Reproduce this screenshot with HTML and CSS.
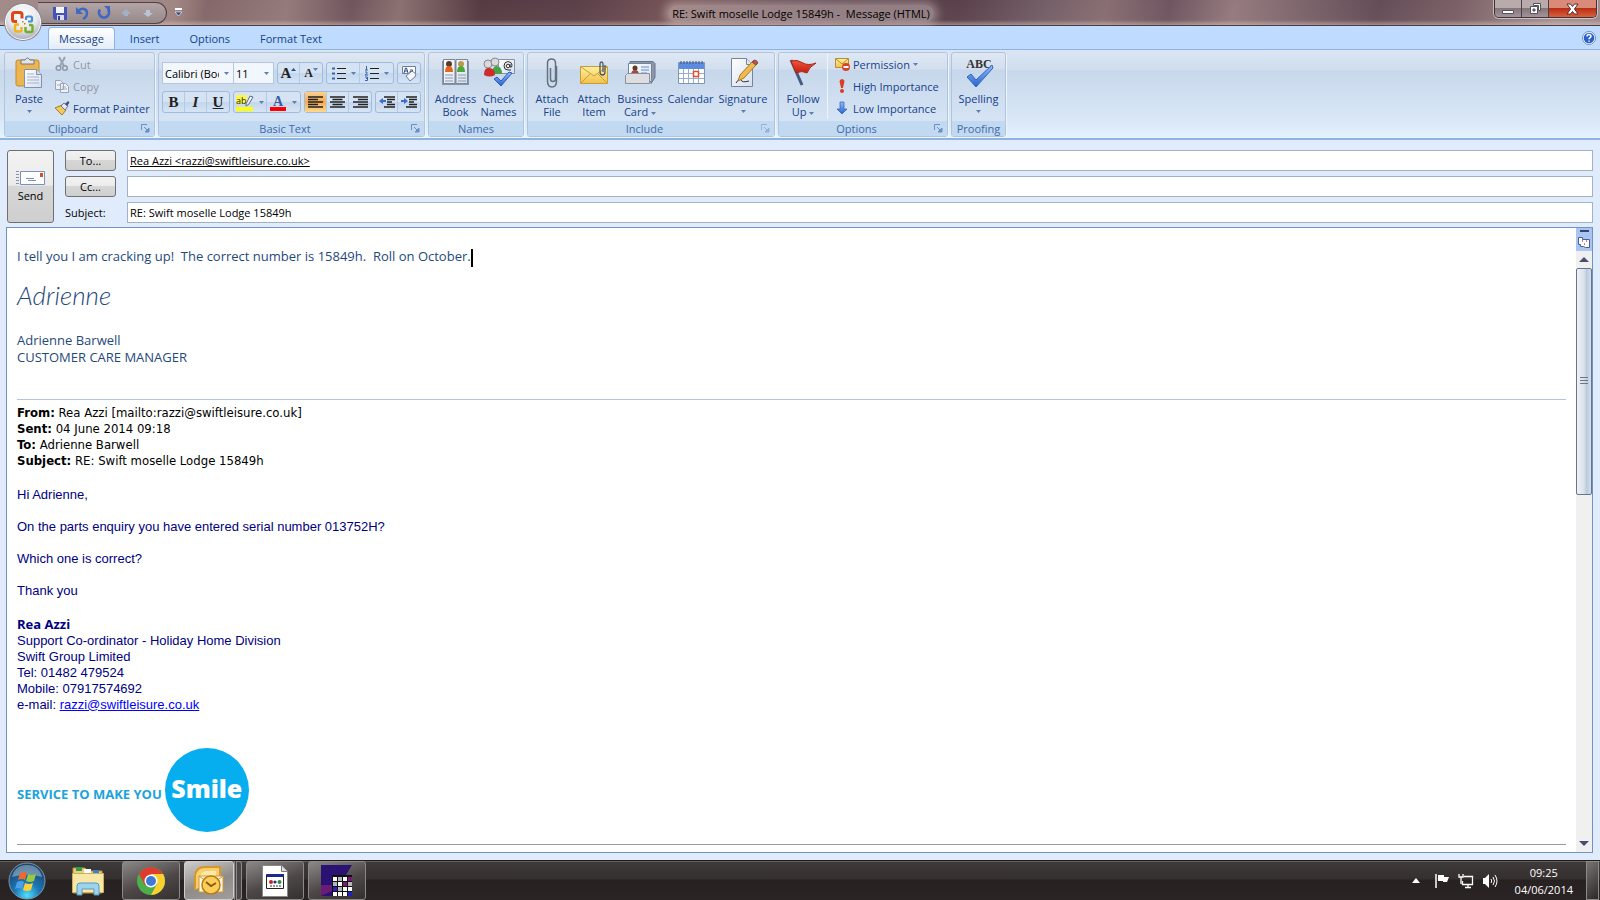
FILE: index.html
```
<!DOCTYPE html>
<html lang="en">
<head>
    <meta charset="UTF-8">
    <meta name="viewport" content="width=device-width, initial-scale=1.0">
    <title>RE: Swift moselle Lodge 15849h - Message (HTML)</title>
    <link rel="stylesheet" href="styles.css">
</head>
<body>
    <svg class="defs" width="0" height="0" aria-hidden="true">
        <defs>
            <linearGradient id="gSheet" x1="0" y1="0" x2="1" y2="1"><stop offset="0" stop-color="#ffffff"/><stop offset="1" stop-color="#d5dfee"/></linearGradient>
            <linearGradient id="gGold" x1="0" y1="0" x2="0" y2="1"><stop offset="0" stop-color="#fff0a0"/><stop offset="1" stop-color="#f2c04c"/></linearGradient>
            <linearGradient id="gBlue" x1="0" y1="0" x2="0" y2="1"><stop offset="0" stop-color="#8fbcff"/><stop offset="1" stop-color="#2a62cc"/></linearGradient>
            <linearGradient id="gRed" x1="0" y1="0" x2="0" y2="1"><stop offset="0" stop-color="#f4553a"/><stop offset="1" stop-color="#c01f10"/></linearGradient>
            <radialGradient id="gOrb" cx="0.5" cy="0.9" r="0.8"><stop offset="0" stop-color="#4fe0ff"/><stop offset="0.45" stop-color="#1c76b4"/><stop offset="1" stop-color="#1b4772"/></radialGradient>
            <radialGradient id="gPearl" cx="0.5" cy="0.3" r="0.7"><stop offset="0" stop-color="#ffffff"/><stop offset="0.6" stop-color="#e6e8ee"/><stop offset="1" stop-color="#a9afbd"/></radialGradient>
            <symbol id="drop" viewBox="0 0 5 3"><path d="M0 0h5L2.500 3z" fill="#5b7fb5"/></symbol>
            <symbol id="launcher" viewBox="0 0 9 9"><path d="M.5 6V.5H6" fill="none" stroke="#6a8fc4"/><path d="M3 3l3 3M8 4v4H4z" stroke="#6a8fc4" fill="#6a8fc4"/></symbol>
        </defs>
    </svg>

    <!-- title bar -->
    <header class="titlebar">
        <button class="office" aria-label="Office">
            <svg width="40" height="40" viewBox="0 0 40 40">
                <circle cx="20" cy="20" r="19" fill="#8d8791"/>
                <circle cx="20" cy="20" r="17.500" fill="url(#gPearl)" stroke="#fff"/>
                <g fill="none">
                    <path d="M14 19.500h-2.500q-2 0-2-2v-5q0-2 2-2h5.500q2 0 2 2v4" stroke="#dd4813" stroke-width="3"/>
                    <path d="M23 18v-2q0-1.500 1.500-1.500h3q1.500 0 1.500 1.500v2q0 1.500-1.500 1.500H25" stroke="#4a8ed6" stroke-width="2.200"/>
                    <path d="M16 22.500h-2.500q-1.500 0-1.500 1.500v4q0 1.500 1.500 1.500H17q1.500 0 1.500-1.500v-3" stroke="#f0b51c" stroke-width="2.500"/>
                    <path d="M22.500 25v3.500q0 1.500 1.500 1.500h4q1.500 0 1.500-1.500v-4q0-1.500-1.500-1.500H26" stroke="#74ae2c" stroke-width="2.500"/>
                </g>
                <path d="M19 19h1.500v1.500H19zM21 21h1.500v1.500H21z" fill="#c8792c"/>
            </svg>
        </button>
        <div class="quick">
            <button aria-label="Save"><svg width="16" height="16" viewBox="0 0 16 16"><path d="M1 2h14v13H3l-2-2z" fill="#4552b8"/><path d="M4 2h8v6H4z" fill="#f3f5fc"/><path d="M5 10h7v5H5z" fill="#d8dcee"/><path d="M6 11h2v4H6z" fill="#333f95"/></svg></button>
            <button aria-label="Undo"><svg width="16" height="16" viewBox="0 0 16 16"><path d="M4 6c4-4 9-2 9 2 0 3-2 5-4 6" fill="none" stroke="#4167c4" stroke-width="2.500"/><path d="M2 2v7h7z" fill="#4167c4"/></svg></button>
            <button aria-label="Redo"><svg width="16" height="16" viewBox="0 0 16 16"><path d="M4 4.500a5 5 0 1 0 8 0" fill="none" stroke="#4167c4" stroke-width="2.800"/><path d="M8 1h6v6z" fill="#4167c4"/></svg></button>
            <button aria-label="Previous item"><svg width="16" height="16" viewBox="0 0 16 16"><path d="M8 4l5 5h-3v2H6V9H3z" fill="#a3b0c8"/></svg></button>
            <button aria-label="Next item"><svg width="16" height="16" viewBox="0 0 16 16"><path d="M8 12L3 8h3V5h4v3h3z" fill="#b9c4d8"/></svg></button>
        </div>
        <button class="customize" aria-label="Customize toolbar"><svg width="7" height="8" viewBox="0 0 7 8"><path d="M0 1h7" stroke="#fff" stroke-width="2"/><path d="M0 4h7L3.500 8z" fill="#2f4d86" stroke="#fff" stroke-width=".6"/></svg></button>
        <h1 class="title"><span>RE: Swift moselle Lodge 15849h - &nbsp;Message (HTML)</span></h1>
        <div class="window-buttons">
            <button class="min" aria-label="Minimize"><svg width="12" height="14" viewBox="0 0 12 14"><path d="M.5 8.500h11v3H.5z" fill="#fff" stroke="#55505c"/></svg></button>
            <button class="max" aria-label="Restore"><svg width="13" height="13" viewBox="0 0 13 13"><path d="M4.500 1.500h7v7h-2v-5h-5zM1.500 4.500h7v7h-7zM4 7v2h2V7z" fill="#fff" stroke="#55505c" fill-rule="evenodd"/></svg></button>
            <button class="close" aria-label="Close"><svg width="13" height="12" viewBox="0 0 13 12"><path d="M1 1h3.500l2 2.500L8.500 1H12L8.500 6l3.500 5H8.500l-2-2.500-2 2.500H1l3.500-5z" fill="#fff" stroke="#5c2a2c"/></svg></button>
        </div>
    </header>

    <nav class="tabs">
        <a class="tab active" href="#message">Message</a>
        <a class="tab" href="#insert">Insert</a>
        <a class="tab" href="#options">Options</a>
        <a class="tab" href="#format">Format Text</a>
        <button class="help" aria-label="Help"><svg width="14" height="14" viewBox="0 0 14 14"><circle cx="7" cy="7" r="6.500" fill="#fff" stroke="#6c8fca"/><circle cx="7" cy="7" r="5.300" fill="#2a5fc8"/><path d="M5 5.500C5 3 9 3 9 5.300c0 1.300-2 1.400-2 2.900M7 9.500v1.300" fill="none" stroke="#fff" stroke-width="1.500"/></svg></button>
    </nav>

    <!-- ribbon -->
    <div class="ribbon">
        <section class="group clipboard">
            <div class="group-body">
                <button class="big">
                    <svg width="32" height="32" viewBox="0 0 32 32"><rect x="3" y="3" width="23" height="26" rx="2" fill="#edb552" stroke="#c28a32"/><path d="M8 3h4q2.500-4 5 0h4v4H8z" fill="#e4e4e8" stroke="#77777f"/><path d="M11.500 12.500h12l5 5v13h-17z" fill="url(#gSheet)" stroke="#7d93b5"/><path d="M23.500 12.500v5h5" fill="#cddaf0" stroke="#7d93b5"/><path d="M14 17h7M14 20h12M14 23h12M14 26h12" stroke="#a4b3cc"/></svg>
                    <span>Paste</span><svg class="arrow" width="5" height="3"><use href="#drop"/></svg>
                </button>
                <div class="stack">
                    <button class="small off"><svg width="16" height="16" viewBox="0 0 16 16"><path d="M5 1l5 9M11 1L6 10" stroke="#98a2b2" stroke-width="2"/><circle cx="4.500" cy="12" r="2.300" fill="none" stroke="#8c97a8" stroke-width="1.500"/><circle cx="11" cy="12" r="2.300" fill="none" stroke="#8c97a8" stroke-width="1.500"/></svg>Cut</button>
                    <button class="small off"><svg width="16" height="16" viewBox="0 0 16 16"><path d="M1.500 2.500h5l3 3v6h-8zM6.500 5.500h5l3 3v6h-8z" fill="#eef1f7" stroke="#98a4b8"/><path d="M8 9h4M8 11h5M3 7h3" stroke="#a5afbf"/></svg>Copy</button>
                    <button class="small"><svg width="16" height="16" viewBox="0 0 16 16"><path d="M1 8l7-3 4 5-4 5z" fill="#f0c95c" stroke="#a07d2e"/><path d="M7 6l3-3 4 3-3 4z" fill="#e4e8f0" stroke="#66779a"/><path d="M11 4l3-3 1.500 1.500L13 6z" fill="#3c4f7d"/></svg>Format Painter</button>
                </div>
            </div>
            <footer>Clipboard<button aria-label="Clipboard dialog"><svg width="9" height="9"><use href="#launcher"/></svg></button></footer>
        </section>

        <section class="group basic">
            <div class="group-body">
                <div class="line">
                    <div class="combo font-name"><select aria-label="Font"><option>Calibri (Body)</option></select><svg width="5" height="3"><use href="#drop"/></svg></div>
                    <div class="combo font-size"><select aria-label="Font size"><option>11</option></select><svg width="5" height="3"><use href="#drop"/></svg></div>
                    <div class="set">
                        <button class="letter grow" aria-label="Grow font">A<svg width="5" height="3" viewBox="0 0 5 3"><path d="M0 3h5L2.500 0z" fill="#2f4f90"/></svg></button>
                        <button class="letter shrink" aria-label="Shrink font">A<svg width="5" height="3"><use href="#drop"/></svg></button>
                    </div>
                    <div class="set">
                        <button class="wide" aria-label="Bullets"><svg width="15" height="15" viewBox="0 0 15 15"><path d="M1 2.500h3M1 7.500h3M1 12.500h3" stroke="#3d62ad" stroke-width="2"/><path d="M6 2.500h9M6 7.500h9M6 12.500h9" stroke="#222"/></svg><svg width="5" height="3"><use href="#drop"/></svg></button>
                        <button class="wide" aria-label="Numbering"><svg width="15" height="15" viewBox="0 0 15 15"><path d="M2.500 0v4M1 4h3M1 6h2v1.500L1 9h3M1 11h2.500v3.500H1M2 12.500h1.500" fill="none" stroke="#3d62ad"/><path d="M6 2.500h9M6 7.500h9M6 12.500h9" stroke="#222"/></svg><svg width="5" height="3"><use href="#drop"/></svg></button>
                    </div>
                    <div class="set"><button aria-label="Clear formatting"><svg width="17" height="17" viewBox="0 0 17 17"><path d="M1.500 1.500h13v7h-13z" fill="#fff" stroke="#6f7f9c"/><path d="M3 8l1.500-5h1L7 8M4 6h2.500M9 5h2.500v3H9V6.500h2.500" fill="none" stroke="#2d4a8a"/><path d="M5 11l6-5 4 3-1 3-5 4z" fill="#f4f6fa" stroke="#71809a"/></svg></button></div>
                </div>
                <div class="line">
                    <div class="set">
                        <button class="glyph bold" aria-label="Bold">B</button>
                        <button class="glyph italic" aria-label="Italic">I</button>
                        <button class="glyph underline" aria-label="Underline">U</button>
                    </div>
                    <div class="set">
                        <button class="wide" aria-label="Highlight"><svg width="18" height="17" viewBox="0 0 18 17"><path d="M0 1h11v9H0z" fill="#fbf64a"/><text class="mark" x="0" y="10">ab</text><path d="M10 10l4-8 3 1-4 7-3 2z" fill="#eef2fa" stroke="#556a94"/><path d="M0 13h17v4H0z" fill="#ff0"/></svg><svg width="5" height="3"><use href="#drop"/></svg></button>
                        <button class="wide" aria-label="Font color"><svg width="17" height="17" viewBox="0 0 17 17"><text class="ink" x="8" y="12" text-anchor="middle">A</text><path d="M0 13h16v4H0z" fill="#f00"/></svg><svg width="5" height="3"><use href="#drop"/></svg></button>
                    </div>
                    <div class="set">
                        <button class="on" aria-label="Align left"><svg width="15" height="13" viewBox="0 0 15 13"><path d="M0 1h15M0 3.500h10M0 6h15M0 8.500h10M0 11h15" stroke="#222" stroke-width="1.300"/></svg></button>
                        <button aria-label="Center"><svg width="15" height="13" viewBox="0 0 15 13"><path d="M0 1h15M2.500 3.500h10M0 6h15M2.500 8.500h10M0 11h15" stroke="#222" stroke-width="1.300"/></svg></button>
                        <button aria-label="Align right"><svg width="15" height="13" viewBox="0 0 15 13"><path d="M0 1h15M5 3.500h10M0 6h15M5 8.500h10M0 11h15" stroke="#222" stroke-width="1.300"/></svg></button>
                    </div>
                    <div class="set">
                        <button aria-label="Decrease indent"><svg width="16" height="13" viewBox="0 0 16 13"><path d="M5 1h11M8 3.500h8M8 6h5M8 8.500h8M5 11h11" stroke="#222" stroke-width="1.500"/><path d="M0 5l4-3v2h3v2H4v2z" fill="#3d6cd0"/></svg></button>
                        <button aria-label="Increase indent"><svg width="16" height="13" viewBox="0 0 16 13"><path d="M5 1h11M8 3.500h8M8 6h5M8 8.500h8M5 11h11" stroke="#222" stroke-width="1.500"/><path d="M7 5L3 2v2H0v2h3v2z" fill="#3d6cd0"/></svg></button>
                    </div>
                </div>
            </div>
            <footer>Basic Text<button aria-label="Font dialog"><svg width="9" height="9"><use href="#launcher"/></svg></button></footer>
        </section>

        <section class="group names">
            <div class="group-body">
                <button class="big">
                    <svg width="32" height="32" viewBox="0 0 32 32"><path d="M2 4h27v24H2z" fill="#8694a8"/><path d="M3.500 2.500H15v24H3.500zM16 2.500h11.500v24H16z" fill="url(#gSheet)" stroke="#7a8595"/><circle cx="9" cy="7" r="3" fill="#5a3c28"/><path d="M5 15q0-6 4-6t4 6z" fill="#e4661c"/><circle cx="21" cy="7" r="3" fill="#b99a4a"/><path d="M17 15q0-6 4-6t4 6z" fill="#4ca83a"/><path d="M5 18h8M5 21h8M5 24h8M18 18h8M18 21h8M18 24h8" stroke="#8897ad"/></svg>
                    <span>Address<br>Book</span>
                </button>
                <button class="big">
                    <svg width="32" height="32" viewBox="0 0 32 32"><path d="M15.500 2.500h16v14h-16z" fill="url(#gSheet)" stroke="#8794a8"/><circle cx="5" cy="7" r="4" fill="#d9d9de" stroke="#888"/><circle cx="12" cy="5" r="4" fill="#d9d9de" stroke="#888"/><path d="M9 17q0-7 4-8 6 0 6 8z" fill="#45a245"/><path d="M1 18q0-8 5-7 6 0 6 7-5 3-11 0z" fill="#ce2c2c"/><circle cx="25" cy="9" r="1.800" fill="none" stroke="#333"/><path d="M27 7v3q2 1 2-2 0-3-4-3.500-4 .5-4 4.500t4 4h3" fill="none" stroke="#333"/><path d="M11 22l3-2 4 4 8-9 3 1-11 13z" fill="url(#gBlue)" stroke="#2c5cb8"/></svg>
                    <span>Check<br>Names</span>
                </button>
            </div>
            <footer>Names</footer>
        </section>

        <section class="group include">
            <div class="group-body">
                <button class="big">
                    <svg width="32" height="32" viewBox="0 0 32 32"><path d="M20.500 9v15q0 6-4.500 6t-4.500-6V6q0-4 4-4t4 4v16q0 2.500-2.500 2.500T14.500 22V11" fill="none" stroke="#66707e" stroke-width="1.500"/></svg>
                    <span>Attach<br>File</span>
                </button>
                <button class="big">
                    <svg width="32" height="32" viewBox="0 0 32 32"><path d="M2.500 9.500h27v17h-27z" fill="url(#gGold)" stroke="#c99f35"/><path d="M3 10l13 9 13-9M3 26l9-9M29 26l-9-9" fill="none" stroke="#c99f35"/><path d="M27 8v7q0 3-2.500 3T22 15V7q0-2 1.500-2T25 7v8" fill="none" stroke="#4d5866" stroke-width="1.300"/></svg>
                    <span>Attach<br>Item</span>
                </button>
                <button class="big">
                    <svg width="32" height="32" viewBox="0 0 32 32"><path d="M6 4.500h23l2 2v14l-4 6V7H6z" fill="#8b98ab" stroke="#66748a"/><path d="M4.500 6.500h23v18h-23z" fill="url(#gSheet)" stroke="#75849a"/><circle cx="11" cy="11" r="2.500" fill="#5a3c28"/><path d="M7 18q0-5 4-5t4 5z" fill="#a54a3a"/><path d="M17 10h8M17 13h8M17 16h6" stroke="#5d8cdb"/><path d="M1.500 18.500l2-2h22v10h-24z" fill="#dcdde0" stroke="#8c9099"/></svg>
                    <span>Business<br>Card <svg width="5" height="3"><use href="#drop"/></svg></span>
                </button>
                <button class="big">
                    <svg width="32" height="32" viewBox="0 0 32 32"><path d="M3.500 5.500h26v21h-26z" fill="#fff" stroke="#7d94bd"/><path d="M4 6h25v6H4z" fill="#5c8ce0"/><path d="M6 4v3M9 4v3M12 4v3M15 4v3M18 4v3M21 4v3M24 4v3M27 4v3" stroke="#3b5487"/><path d="M8.500 12v14M13.500 12v14M18.500 12v14M23.500 12v14M4 16.500h25M4 21.500h25" stroke="#98acd0"/><path d="M18.500 14.500h5v5h-5z" fill="#fff" stroke="#e0502c" stroke-width="1.500"/></svg>
                    <span>Calendar</span>
                </button>
                <button class="big">
                    <svg width="32" height="32" viewBox="0 0 32 32"><path d="M4.500 1.500h15l6 6v22h-21z" fill="url(#gSheet)" stroke="#75849a"/><path d="M19.500 1.500v6h6" fill="#dfe7f4" stroke="#75849a"/><path d="M9 26q4-6 5-3t8 1" fill="none" stroke="#333"/><path d="M11 24l2-6L25 5l4 3-12 13z" fill="#f0bb4c" stroke="#a87728"/><path d="M25 5l2-2q3 0 4 3l-2 2z" fill="#c84a4a" stroke="#7c5353"/></svg>
                    <span>Signature</span><svg class="arrow" width="5" height="3"><use href="#drop"/></svg>
                </button>
            </div>
            <footer>Include<button class="dim" aria-label="Include dialog"><svg width="9" height="9"><use href="#launcher"/></svg></button></footer>
        </section>

        <section class="group options">
            <div class="group-body">
                <button class="big">
                    <svg width="32" height="32" viewBox="0 0 32 32"><path d="M4 3l11 25" stroke="#46597e" stroke-width="3"/><path d="M4 4q6-2 12 2 5 3 13 0-7 4-9 10-5-3-11 0z" fill="url(#gRed)" stroke="#a52a18"/></svg>
                    <span>Follow<br>Up <svg width="5" height="3"><use href="#drop"/></svg></span>
                </button>
                <div class="stack">
                    <button class="small"><svg width="16" height="16" viewBox="0 0 16 16"><path d="M1.500 2.500h13v9h-13z" fill="url(#gGold)" stroke="#b98d2c"/><path d="M2 3l6 5 6-5" fill="none" stroke="#b98d2c"/><circle cx="12" cy="11" r="4" fill="#d84428"/><path d="M9.500 11h5" stroke="#fff" stroke-width="2"/></svg>Permission <svg width="5" height="3"><use href="#drop"/></svg></button>
                    <button class="small"><svg width="16" height="16" viewBox="0 0 16 16"><path d="M5.500 3q2.500-4 5 0L9 10H7z" fill="#dd3c20"/><circle cx="8" cy="13" r="2" fill="#dd3c20"/></svg>High Importance</button>
                    <button class="small"><svg width="16" height="16" viewBox="0 0 16 16"><path d="M6 2h4v7h3l-5 5-5-5h3z" fill="url(#gBlue)" stroke="#2c5cb8" stroke-width=".7"/></svg>Low Importance</button>
                </div>
            </div>
            <footer>Options<button aria-label="Options dialog"><svg width="9" height="9"><use href="#launcher"/></svg></button></footer>
        </section>

        <section class="group proofing">
            <div class="group-body">
                <button class="big">
                    <svg width="32" height="32" viewBox="0 0 32 32"><text class="abc" x="16" y="11" text-anchor="middle">ABC</text><path d="M4 20l4-3 5 6L29 8l1 3-17 19z" fill="url(#gBlue)" stroke="#3566c0"/></svg>
                    <span>Spelling</span><svg class="arrow" width="5" height="3"><use href="#drop"/></svg>
                </button>
            </div>
            <footer>Proofing</footer>
        </section>
    </div>

    <!-- addressing -->
    <form class="fields">
        <button type="button" class="send">
            <svg width="30" height="16" viewBox="0 0 30 16"><path d="M0 1.500h3M0 4.500h3M0 7.500h3M0 10.500h3M0 13.500h3" stroke="#8a93a5"/><path d="M4.500 1.500h24v13h-24z" fill="#fff" stroke="#7a90bd"/><path d="M24 3h3v4h-3z" fill="#d5512c"/><path d="M10 8.500h8M12 10.500h8" stroke="#7a90bd"/></svg>
            Send
        </button>
        <button type="button" class="pick">To...</button>
        <input class="to" type="text" aria-label="To" value="Rea Azzi &lt;razzi@swiftleisure.co.uk&gt;">
        <button type="button" class="pick">Cc...</button>
        <input type="text" aria-label="Cc" value="">
        <label for="subject">Subject:</label>
        <input id="subject" type="text" value="RE: Swift moselle Lodge 15849h">
    </form>

    <!-- message -->
    <main class="message">
        <article class="paper">
            <p class="reply">I tell you I am cracking up!&nbsp; The correct number is 15849h.&nbsp; Roll on October.<span class="cursor"></span></p>
            <p class="script">Adrienne</p>
            <p class="reply sender">Adrienne Barwell<br>CUSTOMER CARE MANAGER</p>
            <div class="quoted-head">
                <b>From:</b> Rea Azzi [mailto:razzi@swiftleisure.co.uk]<br>
                <b>Sent:</b> 04 June 2014 09:18<br>
                <b>To:</b> Adrienne Barwell<br>
                <b>Subject:</b> RE: Swift moselle Lodge 15849h
            </div>
            <div class="quoted">
                <p>Hi Adrienne,</p>
                <p>On the parts enquiry you have entered serial number 013752H?</p>
                <p>Which one is correct?</p>
                <p>Thank you</p>
                <p><b>Rea Azzi</b><br>
                Support Co-ordinator - Holiday Home Division<br>
                Swift Group Limited<br>
                Tel: 01482 479524<br>
                Mobile: 07917574692<br>
                e-mail: <a href="mailto:razzi@swiftleisure.co.uk">razzi@swiftleisure.co.uk</a></p>
            </div>
            <div class="smile">
                <span>SERVICE TO MAKE YOU</span>
                <strong>Smile</strong>
            </div>
            <hr>
        </article>
        <div class="scrollbar">
            <button class="browse" aria-label="Select browse object"><svg width="14" height="20" viewBox="0 0 14 20"><path d="M3 1h9" stroke="#3a4668" stroke-width="2"/><path d="M1.500 7.500h4v2h7v8h-4l-2-1h-3v-2h-2z" fill="#fff" stroke="#4c5e93"/><path d="M5 11h1M9 11h1M7 14h1" stroke="#b05a70" stroke-width="1.500"/></svg></button>
            <button class="step" aria-label="Scroll up"><svg width="10" height="5" viewBox="0 0 10 5"><path d="M0 5L5 0l5 5z" fill="#4a4f70"/></svg></button>
            <div class="track"><div class="thumb"><svg width="8" height="8" viewBox="0 0 8 8"><path d="M0 .5h8M0 3.500h8M0 6.500h8" stroke="#6c7787"/></svg></div></div>
            <button class="step" aria-label="Scroll down"><svg width="10" height="5" viewBox="0 0 10 5"><path d="M0 0l5 5 5-5z" fill="#4a4f70"/></svg></button>
        </div>
    </main>

    <!-- taskbar -->
    <footer class="taskbar">
        <button class="start" aria-label="Start">
            <svg width="38" height="38" viewBox="0 0 38 38"><circle cx="19" cy="19" r="18" fill="url(#gOrb)" stroke="#7d97a8"/><path d="M4 15q3-12 15-12t15 12q-15-5-30 0z" fill="#fff" opacity=".35"/><path d="M12 11q4-2 7 0l-2 7q-3-2-7 0z" fill="#ee6a2c"/><path d="M20 12q4 2 8 0l-2 7q-4 2-8 0z" fill="#98cc3e"/><path d="M9 20q4-2 7 0l-2 7q-3-2-7 0z" fill="#4c9fe8"/><path d="M17 21q4 2 8 0l-2 7q-4 2-8 0z" fill="#fccf3c"/></svg>
        </button>
        <button class="pinned" aria-label="Windows Explorer">
            <svg width="34" height="32" viewBox="0 0 34 32"><path d="M2 3h12l2 3h15v22H2z" fill="#e9cf7c" stroke="#b9973e"/><path d="M5 2h6v4H5z" fill="#2f9c48"/><path d="M13 4h7v5h-7z" fill="#fff"/><path d="M22 5h6v4h-6z" fill="#3b7fd4"/><path d="M1.500 8.500h31v19h-31z" fill="#f8e8a6" stroke="#cfae58"/><path d="M6 30v-9q0-3 3-3h16q3 0 3 3v9h-5v-6H11v6z" fill="#9cd4f0" stroke="#5897c4"/></svg>
        </button>
        <button class="app" aria-label="Google Chrome">
            <svg width="30" height="30" viewBox="0 0 30 30"><circle cx="15" cy="15" r="14" fill="#4fae4c"/><path d="M15 15L2.900 8A14 14 0 0 1 27.100 8z" fill="#dd3d2f"/><path d="M2.900 8L9 19l6-4-2-7z" fill="#dd3d2f"/><path d="M15 8h12.100A14 14 0 0 1 15 29l6-11z" fill="#fcd12e"/><circle cx="15" cy="15" r="6.500" fill="#fff"/><circle cx="15" cy="15" r="5" fill="#3f7ad6"/></svg>
        </button>
        <button class="app current" aria-label="Outlook">
            <svg width="34" height="32" viewBox="0 0 34 32"><path d="M3 25V11q1-9 10-9h15v8" fill="#f8cf6a" stroke="#d9962a" stroke-width="2"/><path d="M8 12q1-6 7-6h9v8H8z" fill="#fdeaa9"/><path d="M7 11h24v16H7z" fill="#fff6dc" stroke="#cf9a35"/><path d="M7 11l12 9 12-9" fill="none" stroke="#cf9a35"/><circle cx="19" cy="20" r="9" fill="#fbcf57" stroke="#b97a1b" stroke-width="1.500"/><path d="M14 17l5 4 5-3" fill="none" stroke="#8a5a12" stroke-width="2"/></svg>
        </button>
        <span class="pile"></span>
        <button class="app" aria-label="Document">
            <svg width="26" height="32" viewBox="0 0 26 32"><path d="M.5.5h19l6 6v25H.5z" fill="#fff" stroke="#888"/><path d="M19.500.5v6h6" fill="#ddd" stroke="#777"/><path d="M4.500 9.500h17v14h-17z" fill="#fff" stroke="#222"/><path d="M5 9h17v3H5z" fill="#1c2a8c"/><circle cx="9" cy="17" r="2" fill="#c3262c"/><circle cx="13" cy="17" r="1.600" fill="#2b2b80"/><circle cx="17.500" cy="17" r="2" fill="#2a8c4a"/><path d="M8 21h11" stroke="#333" stroke-dasharray="2 1"/></svg>
        </button>
        <button class="app" aria-label="Database">
            <svg width="32" height="32" viewBox="0 0 32 32"><path d="M0 0h31l-6 10-13 10v11H0z" fill="#2a1272"/><path d="M0 20h11v6L0 31z" fill="#6b1a76"/><path d="M11 10h20v21H11z" fill="#111"/><path d="M12 12h4v4h-4zM22 12h4v4h-4zM17 17h4v4h-4zM22 22h4v4h-4zM12 27h4v4h-4zM17 27h4v4h-4zM22 27h4v4h-4zM27 22h4v4h-4z" fill="#fff"/><path d="M17 12h4v4h-4zM12 17h4v4h-4zM27 17h4v4h-4zM17 22h4v4h-4z" fill="#b5b5c0"/><path d="M27 12h4v4h-4zM22 17h4v4h-4z" fill="#7d1a78"/><path d="M12 22h4v4h-4zM27 27h4v4h-4z" fill="#2222c0"/></svg>
        </button>
        <div class="tray">
            <svg width="8" height="5" viewBox="0 0 8 5"><path d="M0 5l4-5 4 5z" fill="#fff"/></svg>
            <svg width="16" height="16" viewBox="0 0 16 16"><path d="M2 1v14" stroke="#fff" stroke-width="1.500"/><path d="M4 2h6v2h5l-2 5H9V8H4z" fill="#fff"/></svg>
            <svg width="16" height="16" viewBox="0 0 16 16"><path d="M5.500 3.500h9v8H4.500V8M7 14.500h6M10 12v2" fill="none" stroke="#fff" stroke-width="1.300"/><path d="M1 1v3h4V1M3 4v7" fill="none" stroke="#fff" stroke-width="1.300"/></svg>
            <svg width="16" height="16" viewBox="0 0 16 16"><path d="M1 5h2l4-4v14l-4-4H1z" fill="#fff"/><path d="M9 6q1.500 2 0 4M11 4q3 4 0 8M13 2q4 6 0 12" fill="none" stroke="#fff"/></svg>
        </div>
        <time class="clock">09:25<br>04/06/2014</time>
        <button class="desktop" aria-label="Show desktop"></button>
    </footer>
</body>
</html>
```
FILE: styles.css
```
* {
    box-sizing: border-box;
}

body {
    margin: 0;
    height: 100vh;
    display: flex;
    flex-direction: column;
    overflow: hidden;
    background-color: #e0ebfc;
    font-family: "Open Sans", sans-serif;
    font-size: 11px;
    color: #000;
}

button {
    margin: 0;
    padding: 0;
    border: none;
    background: none;
    font: inherit;
    color: inherit;
    cursor: pointer;
}

svg {
    flex: none;
}

p, h1 {
    margin: 0;
}

.defs {
    position: absolute;
}

/* title bar */
.titlebar {
    display: flex;
    align-items: flex-start;
    height: 26px;
    flex: none;
    border-bottom: 1px solid #4b3c42;
    background: linear-gradient(to bottom, rgba(255, 255, 255, 0.05), rgba(220, 200, 195, 0.1) 80%, rgba(230, 210, 200, 0.5)),
        linear-gradient(100deg, #9c8583 0%, #9b807d 11%, #7d6062 13%, #8e7374 18%, #684c54 22%, #85696a 25%, #4c3038 30%, #523640 36%, #6e4b4e 42%, #533a45 52%, #513742 60%, #6b5560 65%, #82676b 69%, #664c58 73%, #8f7478 77%, #775e66 81%, #5c434f 86%, #74595f 91%, #a08a8c 97%, #9a8588 100%);
}

.office {
    position: absolute;
    left: 3px;
    top: 2px;
    height: 40px;
    z-index: 2;
}

.quick {
    display: flex;
    align-items: center;
    gap: 6px;
    height: 22px;
    margin: 2px 0 0 38px;
    padding: 0 10px 0 14px;
    border: 1px solid #4f4348;
    border-left: none;
    border-radius: 0 11px 11px 0;
    background: linear-gradient(#b3a5a5, #96898b);
}

.quick button {
    height: 16px;
}

.customize {
    margin: 8px 0 0 8px;
    height: 8px;
}

.customize svg, .office svg, .quick svg {
    display: block;
}

.title {
    flex: 1;
    padding-right: 74px;
    text-align: center;
    font-size: 11px;
    font-weight: normal;
    line-height: 27px;
}

.title span {
    padding: 1px 4px;
    border-radius: 10px;
    background-color: rgba(230, 215, 212, 0.4);
    box-shadow: 0 0 8px 4px rgba(230, 215, 212, 0.4);
}

.window-buttons {
    display: flex;
    height: 18px;
    margin-right: 3px;
    border: 1px solid #3e3338;
    border-top: none;
    border-radius: 0 0 5px 5px;
    overflow: hidden;
    box-shadow: 0 0 0 1px rgba(255, 255, 255, 0.5);
}

.window-buttons button {
    display: flex;
    justify-content: center;
    align-items: center;
    width: 27px;
    border-right: 1px solid #4c4046;
    background: linear-gradient(#b9abac 50%, #857679 50%, #a2949a);
}

.window-buttons .close {
    width: 47px;
    border-right: none;
    background: linear-gradient(#d98a78 45%, #b92f14 50%, #d8603c);
}

/* tabs */
.tabs {
    display: flex;
    align-items: flex-end;
    height: 23px;
    flex: none;
    padding-left: 48px;
    background-color: #bfdbff;
}

.tab {
    padding: 0 15px;
    line-height: 24px;
    height: 22px;
    color: #15428b;
    text-decoration: none;
}

.tab.active {
    padding: 0 10px;
    border: 1px solid #8db2e3;
    border-bottom: none;
    border-radius: 4px 4px 0 0;
    background: linear-gradient(#ffffff, #e3edf8);
    line-height: 22px;
}

.help {
    margin: 0 4px 4px auto;
    height: 14px;
}

/* ribbon */
.ribbon {
    display: flex;
    gap: 3px;
    height: 91px;
    flex: none;
    padding: 2px 4px 1px;
    border-top: 1px solid #8db2e3;
    border-bottom: 2px solid #8fb3dd;
    background: linear-gradient(#dbe6f4 0, #cfdded 20px, #c8d8ec 21px, #d9e7f6 70px, #e3f3ff);
}

.group {
    display: flex;
    flex-direction: column;
    border: 1px solid #aec4df;
    border-radius: 3px;
    background: linear-gradient(#dfe8f4 0, #d3dfee 16px, #c7d7eb 17px, #dae8f7);
    box-shadow: 1px 1px 0 #edf4fc;
    color: #15428b;
}

.group-body {
    flex: 1;
    display: flex;
}

.group footer {
    display: flex;
    align-items: center;
    height: 15px;
    background-color: #c1d9f1;
    color: #3e6aaa;
    line-height: 15px;
}

.group footer::before,
.group footer::after {
    content: "";
    flex: 1;
}

.group footer button {
    height: 9px;
    margin-right: 4px;
    order: 2;
}

.group footer::after {
    order: 1;
}

.group footer svg {
    display: block;
}

.group footer .dim {
    opacity: 0.5;
}

.clipboard { width: 151px; }
.basic { width: 267px; }
.names { width: 96px; }
.include { width: 248px; }
.options { width: 170px; }
.proofing { width: 55px; }

.big {
    display: flex;
    flex-direction: column;
    align-items: center;
    padding-top: 4px;
    line-height: 13px;
}

.big span {
    padding-top: 3px;
}

.big span svg {
    vertical-align: middle;
}

.big .arrow {
    margin-top: 5px;
}

.clipboard .big {
    width: 48px;
}

.names .group-body, .proofing .group-body {
    display: grid;
    grid-auto-flow: column;
    grid-auto-columns: 1fr;
    padding: 0 3px;
}

.names .group-body {
    padding: 0 3px 0 5px;
}

.include .group-body {
    display: grid;
    grid-template-columns: 42px 42px 50px 51px 54px;
    padding-left: 3px;
}

.options .big {
    width: 48px;
}

.stack {
    display: flex;
    flex-direction: column;
    height: 66px;
    padding-left: 1px;
}

.options .stack {
    padding-left: 6px;
    border-left: 1px solid #eef4fb;
}

.small {
    display: flex;
    align-items: center;
    gap: 3px;
    height: 22px;
    white-space: nowrap;
}

.small.off {
    color: #8d97a6;
}

.abc {
    font: bold 12px "Liberation Serif", serif;
    fill: #333;
}

.basic .group-body {
    flex-direction: column;
    gap: 7px;
    padding: 9px 3px 0;
}

.line {
    display: flex;
    gap: 3px;
    height: 22px;
}

.combo {
    display: flex;
    align-items: center;
    gap: 5px;
    padding-right: 4px;
    border: 1px solid #b3c7e1;
    background-color: #f2f7fd;
}

.combo select {
    flex: 1;
    min-width: 0;
    height: 20px;
    margin: 0;
    padding: 0 0 0 2px;
    border: none;
    background: none;
    appearance: none;
    font: inherit;
    color: #000;
    text-overflow: clip;
}

.font-name { width: 72px; }
.font-size {
    width: 43px;
    margin-left: -4px;
}

.set {
    display: flex;
    border: 1px solid #9ebbe0;
    border-radius: 3px;
    background: linear-gradient(#d6e3f3 48%, #c4d6ec 50%, #d5e4f5);
}

.set button {
    display: flex;
    justify-content: center;
    align-items: center;
    width: 22px;
    border-right: 1px solid #b3cae6;
}

.set button:last-child {
    border-right: none;
}

.set .wide {
    width: 33px;
    gap: 5px;
}

.set .on {
    background: linear-gradient(#fbd08e, #f6a954 50%, #fdd98c);
}

.letter, .glyph {
    font-family: "Liberation Serif", serif;
    font-weight: bold;
    font-size: 15px;
    color: #222;
}

.set .letter svg {
    margin-bottom: 8px;
}

.shrink {
    font-size: 12px;
}

.italic {
    font-style: italic;
}

.underline {
    text-decoration: underline;
}

.mark {
    font-size: 9px;
    fill: #222;
}

.ink {
    font: bold 14px "Liberation Serif", serif;
    fill: #3b5da0;
}

/* addressing */
.fields {
    display: grid;
    grid-template-columns: 47px 51px 1fr;
    grid-auto-rows: 21px;
    gap: 5px 11px;
    padding: 10px 7px 4px;
    flex: none;
}

.send {
    grid-row: span 3;
    display: flex;
    flex-direction: column;
    align-items: center;
    justify-content: center;
    gap: 2px;
}

.send, .pick {
    border: 1px solid #707070;
    border-radius: 3px;
    background: linear-gradient(#f2f2f2, #ebebeb 48%, #d6d6d6 50%, #cfcfcf);
}

.fields input {
    min-width: 0;
    padding: 0 2px;
    border: 1px solid #a3b1c4;
    background-color: #fff;
    font: inherit;
}

.fields .to {
    text-decoration: underline;
}

.fields label {
    line-height: 21px;
}

/* message */
.message {
    flex: 1;
    min-height: 0;
    display: flex;
    margin: 0 7px 7px 6px;
    border: 1px solid #6f93c5;
    background-color: #fff;
}

.paper {
    flex: 1;
    padding: 19px 10px 0;
    overflow: hidden;
}

.reply {
    font-size: 13px;
    line-height: 18px;
    color: #1f497d;
}

.cursor {
    display: inline-block;
    width: 2px;
    height: 18px;
    background-color: #000;
    vertical-align: middle;
}

.script {
    margin: 12px 0 21px;
    font: italic 300 26px/32px Lato, cursive;
    color: #1f497d;
}

.sender {
    line-height: 17px;
}

.quoted-head {
    margin-top: 33px;
    padding-top: 5px;
    border-top: 1px solid #b5c4df;
    font: 13px/16px "DejaVu Sans Condensed", "DejaVu Sans", sans-serif;
}

.quoted {
    margin-top: 18px;
    font: 13px/16px "Liberation Sans", Arial, sans-serif;
    color: #000080;
}

.quoted p {
    margin-bottom: 16px;
}

.quoted b {
    font-family: "Open Sans", sans-serif;
    line-height: 18px;
}

.quoted a {
    color: #0000ff;
}

.smile {
    display: flex;
    align-items: center;
    gap: 3px;
    margin-top: 35px;
    color: #1ba3dc;
    font-size: 13px;
    font-weight: bold;
}

.smile span {
    padding-top: 8px;
}

.smile strong {
    display: flex;
    align-items: center;
    justify-content: center;
    width: 84px;
    height: 84px;
    padding-bottom: 3px;
    border-radius: 50%;
    background-color: #06aeef;
    color: #fff;
    font-size: 25px;
}

.paper hr {
    margin: 12px 0 0;
    border: none;
    border-top: 1px solid #9a9a9a;
}

.scrollbar {
    display: flex;
    flex-direction: column;
    width: 16px;
    background-color: #f0f0f0;
}

.scrollbar button {
    display: flex;
    justify-content: center;
    align-items: center;
}

.browse {
    height: 23px;
    background-color: #a9c6f3;
}

.step {
    height: 17px;
}

.track {
    flex: 1;
}

.thumb {
    display: flex;
    align-items: center;
    justify-content: center;
    height: 40%;
    border: 1px solid #6a7193;
    border-radius: 2px;
    background: linear-gradient(to right, #f0f2f5, #d9e1ea 50%, #b8cbdb 70%, #d4e0ea);
}

/* taskbar */
.taskbar {
    display: flex;
    align-items: stretch;
    height: 40px;
    flex: none;
    border-top: 1px solid #1e1a1a;
    background: linear-gradient(to bottom, #8a8583 0, #3f3a3a 1px, #352f2f 45%, #272121 50%, #2a2424);
    color: #fff;
}

.taskbar button {
    display: flex;
    justify-content: center;
    align-items: center;
}

.start {
    width: 54px;
}

.pinned {
    width: 68px;
}

.app {
    width: 58px;
    margin-right: 4px;
    border: 1px solid #8d8988;
    border-radius: 3px;
    background: linear-gradient(160deg, #8b8887, #4d4847 55%, #353030);
}

.taskbar .current {
    width: 50px;
    margin-right: 0;
    border-color: #cfcdcb;
    background: linear-gradient(160deg, #d0cecc, #8f8b89 55%, #a19d9b);
}

.pile {
    width: 8px;
    margin-right: 4px;
    border: 1px solid #8d8988;
    border-left: 3px double #8d8988;
    border-radius: 0 3px 3px 0;
    background-color: #4b4645;
}

.tray {
    display: flex;
    align-items: center;
    gap: 8px;
    margin-left: auto;
}

.tray svg:first-child {
    margin-right: 6px;
}

.clock {
    padding: 3px 13px 0 17px;
    text-align: center;
    line-height: 17px;
}

.desktop {
    width: 13px;
    margin-right: 1px;
    border: 1px solid #8d8988;
    background: linear-gradient(135deg, #777372, #2d2828);
}
```
